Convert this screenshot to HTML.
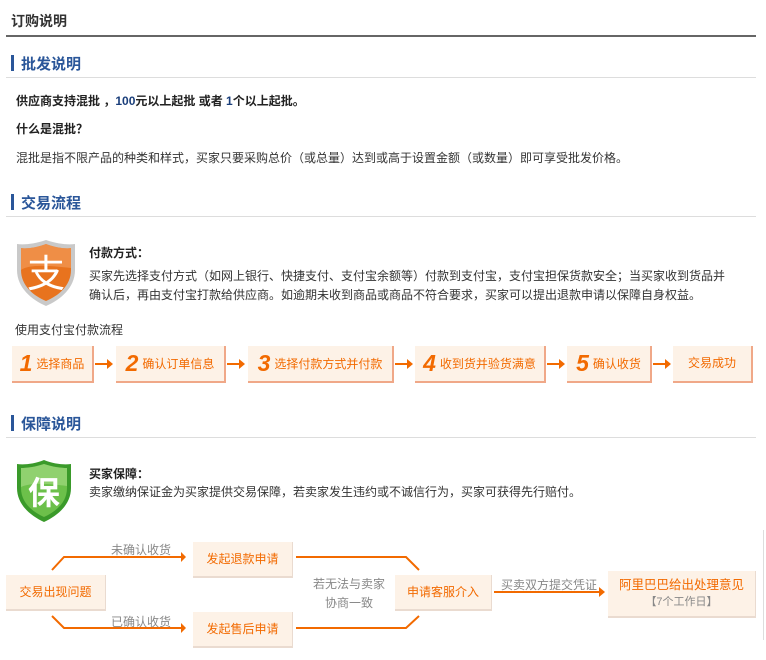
<!DOCTYPE html>
<html><head><meta charset="utf-8"><style>
body{margin:0;width:766px;height:660px;background:#fff;position:relative;overflow:hidden;font-family:"Liberation Sans","Noto Sans CJK SC","WenQuanYi Zen Hei",sans-serif;font-size:12px;color:#333}
.a{position:absolute;white-space:nowrap}
.h{font-size:15px;font-weight:bold;color:#2a5699}
.bar{position:absolute;width:3px;height:16px;background:#2a5699}
.ln{position:absolute;left:6px;width:750px;height:1px;background:#ddd}
.b{font-weight:bold;color:#222}
.st{position:absolute;top:346px;height:35px;background:#fdf2e7;border-right:2px solid #f0a888;border-bottom:2px solid #f0a888;color:#f26a00;font-size:12px;line-height:35px;text-align:center;white-space:nowrap}
.st i{font-style:italic;font-weight:bold;font-size:23px;vertical-align:-3px;margin-right:4px;font-family:"Liberation Sans",sans-serif}
.ar{position:absolute;top:363px;height:2px;background:#f26a00}
.ar:after{content:"";position:absolute;right:-4px;top:-4px;border-left:6px solid #f26a00;border-top:5px solid transparent;border-bottom:5px solid transparent}
.fb{position:absolute;background:#fdf2e7;border-right:1px solid #eadbd0;border-bottom:2px solid #eadbd0;color:#f26a00;font-size:12px;text-align:center;white-space:nowrap}
.g{color:#888;font-size:12px}
</style></head><body>
<div class="a" style="left:11px;top:11px;font-size:14px;font-weight:bold;color:#333">订购说明</div>
<div style="position:absolute;left:6px;top:35px;width:750px;height:2px;background:#666"></div>

<div class="bar" style="left:11px;top:55px"></div>
<div class="a h" style="left:21px;top:53px">批发说明</div>
<div class="ln" style="top:77px"></div>
<div class="a b" style="left:16px;top:92px">供应商支持混批 ，<span style="color:#1a3e7a">100</span>元以上起批 或者 <span style="color:#1a3e7a">1</span>个以上起批。</div>
<div class="a b" style="left:16px;top:120px">什么是混批？</div>
<div class="a" style="left:16px;top:149px">混批是指不限产品的种类和样式，买家只要采购总价（或总量）达到或高于设置金额（或数量）即可享受批发价格。</div>

<div class="bar" style="left:11px;top:194px"></div>
<div class="a h" style="left:21px;top:192px">交易流程</div>
<div class="ln" style="top:216px"></div>

<svg style="position:absolute;left:14px;top:238px" width="64" height="70" viewBox="0 0 64 70">
<path d="M32 2 C20 6 10 7 3 6 L3 32 C3 50 18 62 32 68 C46 62 61 50 61 32 L61 6 C54 7 44 6 32 2Z" fill="#c9c9c9"/>
<path d="M32 6 C21 10 12 11 7 10 L7 32 C7 48 20 58 32 63 C44 58 57 48 57 32 L57 10 C52 11 43 10 32 6Z" fill="#e8731e"/>
<path d="M32 6 C21 10 12 11 7 10 L7 32 C12 28 25 26 57 30 L57 10 C52 11 43 10 32 6Z" fill="#f4a060" opacity=".6"/>
<text x="32" y="49" font-size="38" fill="#fff" text-anchor="middle" font-family="Noto Sans CJK SC,sans-serif">支</text>
</svg>
<div class="a b" style="left:89px;top:244px">付款方式：</div>
<div class="a" style="left:89px;top:267px">买家先选择支付方式（如网上银行、快捷支付、支付宝余额等）付款到支付宝，支付宝担保货款安全；当买家收到货品并</div>
<div class="a" style="left:89px;top:286px">确认后，再由支付宝打款给供应商。如逾期未收到商品或商品不符合要求，买家可以提出退款申请以保障自身权益。</div>
<div class="a" style="left:15px;top:321px">使用支付宝付款流程</div>

<div class="st" style="left:12px;width:80px"><i>1</i>选择商品</div>
<div class="ar" style="left:95px;width:14px"></div>
<div class="st" style="left:116px;width:108px"><i>2</i>确认订单信息</div>
<div class="ar" style="left:227px;width:14px"></div>
<div class="st" style="left:248px;width:144px"><i>3</i>选择付款方式并付款</div>
<div class="ar" style="left:395px;width:14px"></div>
<div class="st" style="left:415px;width:129px"><i>4</i>收到货并验货满意</div>
<div class="ar" style="left:547px;width:14px"></div>
<div class="st" style="left:567px;width:83px"><i>5</i>确认收货</div>
<div class="ar" style="left:653px;width:14px"></div>
<div class="st" style="left:673px;width:78px">交易成功</div>

<div class="bar" style="left:11px;top:415px"></div>
<div class="a h" style="left:21px;top:413px">保障说明</div>
<div class="ln" style="top:437px"></div>

<svg style="position:absolute;left:15px;top:459px" width="58" height="64" viewBox="0 0 58 64">
<path d="M29 1 C19 5 9 6 2 5 L2 29 C2 46 16 57 29 63 C42 57 56 46 56 29 L56 5 C49 6 39 5 29 1Z" fill="#3a9a2a"/>
<path d="M29 5 C20 8 12 9 6 9 L6 29 C6 44 18 53 29 58 C40 53 52 44 52 29 L52 9 C46 9 38 8 29 5Z" fill="#6cc04a"/>
<path d="M29 5 C20 8 12 9 6 9 L6 28 C14 24 30 24 52 27 L52 9 C46 9 38 8 29 5Z" fill="#a8dc88" opacity=".6"/>
<text x="29" y="45" font-size="32" fill="#fff" text-anchor="middle" font-weight="bold" font-family="Noto Sans CJK SC,sans-serif">保</text>
</svg>
<div class="a b" style="left:89px;top:465px">买家保障：</div>
<div class="a" style="left:89px;top:483px">卖家缴纳保证金为买家提供交易保障，若卖家发生违约或不诚信行为，买家可获得先行赔付。</div>

<svg style="position:absolute;left:0;top:530px" width="766" height="130">
<g stroke="#f26a00" stroke-width="2" fill="none">
<path d="M52 40 L64 27 L182 27"/>
<path d="M52 86 L64 98 L182 98"/>
<path d="M296 27 L406 27 L419 40"/>
<path d="M296 98 L406 98 L419 86"/>
<path d="M494 62 L600 62"/>
</g>
<g fill="#f26a00">
<path d="M181 22 L186 27 L181 32Z"/><path d="M181 93 L186 98 L181 103Z"/><path d="M599 57 L605 62 L599 67Z"/>
</g>
</svg>
<div class="fb" style="left:6px;top:575px;width:99px;height:34px;line-height:34px">交易出现问题</div>
<div class="a g" style="left:111px;top:541px">未确认收货</div>
<div class="a g" style="left:111px;top:613px">已确认收货</div>
<div class="fb" style="left:193px;top:542px;width:99px;height:34px;line-height:34px">发起退款申请</div>
<div class="fb" style="left:193px;top:612px;width:99px;height:34px;line-height:34px">发起售后申请</div>
<div class="a g" style="left:313px;top:575px;text-align:center;line-height:19px">若无法与卖家<br>协商一致</div>
<div class="fb" style="left:395px;top:575px;width:96px;height:34px;line-height:34px">申请客服介入</div>
<div class="a g" style="left:501px;top:576px">买卖双方提交凭证</div>
<div class="fb" style="left:608px;top:571px;width:147px;height:45px;line-height:17px"><div style="margin-top:6px;font-size:12.5px">阿里巴巴给出处理意见</div><div style="color:#888;font-size:11px">【7个工作日】</div></div>
<div style="position:absolute;left:763px;top:530px;width:1px;height:110px;background:#ddd"></div>
</body></html>
